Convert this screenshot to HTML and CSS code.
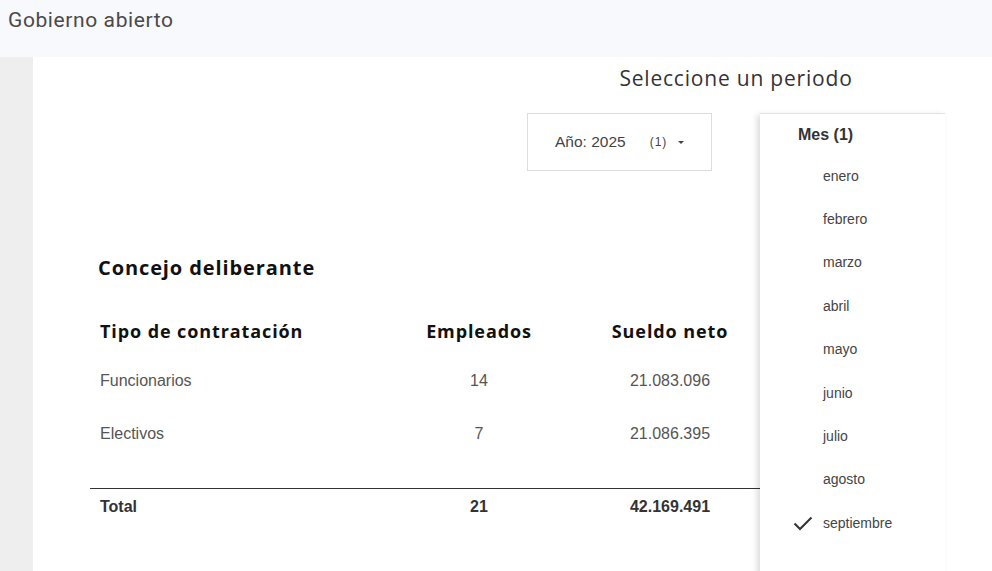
FILE: index.html
```html
<!DOCTYPE html>
<html lang="es">
<head>
<meta charset="utf-8">
<title>Gobierno abierto</title>
<link rel="stylesheet" href="styles.css">
</head>
<body>
<header class="topbar">Gobierno abierto</header>
<div class="layout">
  <aside class="rail"></aside>
  <main class="content">
    <section class="period">
      <div class="period-box">
        <h2 class="period-title">Seleccione un periodo</h2>
        <div class="filters">
          <div class="filter">
            <span class="filter-label">Año: 2025</span>
            <span class="filter-count">(1)</span>
            <span class="caret"></span>
          </div>
          <div class="filter filter-open"></div>
        </div>
      </div>
    </section>

    <section class="report">
      <h3 class="report-title">Concejo deliberante</h3>
      <div class="table">
        <div class="row row-head">
          <div class="cell cell-left">Tipo de contratación</div>
          <div class="cell">Empleados</div>
          <div class="cell">Sueldo neto</div>
        </div>
        <div class="row">
          <div class="cell cell-left">Funcionarios</div>
          <div class="cell">14</div>
          <div class="cell">21.083.096</div>
        </div>
        <div class="row">
          <div class="cell cell-left">Electivos</div>
          <div class="cell">7</div>
          <div class="cell">21.086.395</div>
        </div>
        <div class="row row-total">
          <div class="cell cell-left">Total</div>
          <div class="cell">21</div>
          <div class="cell">42.169.491</div>
        </div>
      </div>
    </section>

    <div class="menu">
      <div class="menu-head">Mes (1)</div>
      <ul class="menu-list">
        <li class="menu-item">enero</li>
        <li class="menu-item">febrero</li>
        <li class="menu-item">marzo</li>
        <li class="menu-item">abril</li>
        <li class="menu-item">mayo</li>
        <li class="menu-item">junio</li>
        <li class="menu-item">julio</li>
        <li class="menu-item">agosto</li>
        <li class="menu-item is-checked">
          <svg class="check" viewBox="0 0 20 16" width="20" height="16"><path d="M1.5 8.5 L7 14 L18.5 2.5" fill="none" stroke="#333" stroke-width="2"/></svg>
          septiembre
        </li>
      </ul>
    </div>
  </main>
</div>
</body>
</html>
```

FILE: styles.css
```css
* { box-sizing: border-box; }

html, body {
  margin: 0;
  padding: 0;
  height: 571px;
  overflow: hidden;
  background: #ffffff;
}

body {
  font-family: "Liberation Sans", Arial, sans-serif;
  color: #333;
}

.topbar {
  height: 57px;
  background: #f8f9fd;
  padding: 7px 0 0 8px;
  font-family: Roboto, "Liberation Sans", sans-serif;
  font-size: 21px;
  line-height: 26px;
  letter-spacing: 0.6px;
  color: #4a4a4a;
}

.layout {
  display: flex;
  height: 514px;
}

.rail {
  width: 33px;
  flex: none;
  background: #eeeeee;
}

.content {
  position: relative;
  flex: 1;
  background: #ffffff;
  overflow: hidden;
}

/* period selector */
.period {
  display: flex;
  justify-content: flex-end;
  padding: 9px 47px 0 0;
}

.period-box {
  width: 418px;
  display: flex;
  flex-direction: column;
  align-items: center;
}

.period-title {
  margin: 0;
  font-family: "Open Sans", sans-serif;
  font-weight: 400;
  font-size: 21px;
  line-height: 24px;
  color: #333;
  letter-spacing: 0.8px;
}

.filters {
  margin-top: 23px;
  display: flex;
  gap: 48px;
  width: 100%;
}

.filter {
  width: 185px;
  height: 58px;
  border: 1px solid #dcdcdc;
  display: flex;
  align-items: center;
  padding-left: 27px;
  font-size: 15.5px;
  color: #444;
}

.filter-open {
  border: none;
}

.filter-count {
  margin-left: 24px;
  font-size: 12px;
  letter-spacing: 1px;
  color: #444;
}

.caret {
  margin-left: 11px;
  width: 0;
  height: 0;
  border-left: 3px solid transparent;
  border-right: 3px solid transparent;
  border-top: 3px solid #444;
}

/* report */
.report {
  padding: 85px 0 0 57px;
}

.report-title {
  margin: 0 0 28px 8px;
  font-family: "Open Sans", sans-serif;
  font-weight: 700;
  font-size: 20px;
  line-height: 24px;
  letter-spacing: 0.9px;
  color: #111;
}

.table {
  width: 700px;
}

.row {
  display: grid;
  grid-template-columns: 294px 190px 192px 1fr;
  height: 53px;
  align-items: center;
  font-size: 16px;
  color: #555;
}

.row-head {
  height: 46px;
  font-family: "Open Sans", sans-serif;
  font-weight: 700;
  font-size: 18px;
  letter-spacing: 0.9px;
  color: #111;
}

.row-total {
  margin-top: 28px;
  height: 36px;
  border-top: 1px solid #333;
  font-weight: 700;
  color: #333;
  font-size: 16px;
}

.cell {
  text-align: center;
}

.cell-left {
  text-align: left;
  padding-left: 10px;
}

/* open month menu */
.menu {
  position: absolute;
  left: 727px;
  top: 56px;
  width: 185px;
  height: 520px;
  background: #fff;
  border-top: 1px solid #e2e2e2;
  box-shadow: -3px 2px 6px rgba(0, 0, 0, 0.14);
}

.menu-head {
  height: 40px;
  padding: 12px 0 0 38px;
  font-weight: 700;
  font-size: 16px;
  color: #333;
}

.menu-list {
  list-style: none;
  margin: 0;
  padding: 0;
}

.menu-item {
  position: relative;
  height: 43.4px;
  display: flex;
  align-items: center;
  padding-left: 63px;
  font-size: 14px;
  color: #444;
}

.check {
  position: absolute;
  left: 33px;
  top: 14px;
}
```
